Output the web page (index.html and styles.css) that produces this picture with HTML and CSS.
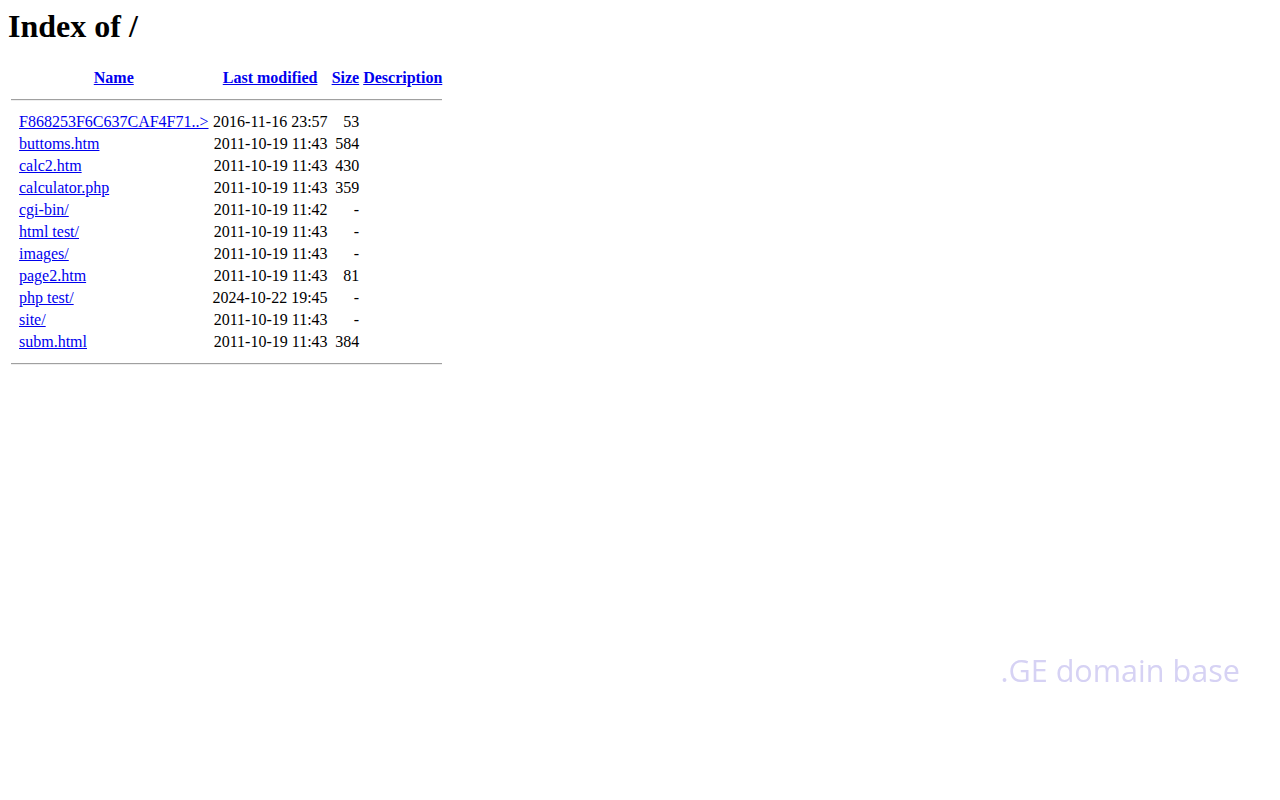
FILE: index.html
```html
<!DOCTYPE html>
<html>
<head>
<meta charset="utf-8">
<title>Index of /</title>
<link rel="stylesheet" href="styles.css">
</head>
<body>
<h1 class="title">Index of /</h1>
<table class="listing">
  <tr class="head">
    <th class="icon"><span class="ico"></span></th>
    <th><a href="#">Name</a></th>
    <th><a href="#">Last modified</a></th>
    <th><a href="#">Size</a></th>
    <th><a href="#">Description</a></th>
  </tr>
  <tr><th colspan="5"><hr class="rule"></th></tr>
  <tr><td class="icon"><span class="ico"></span></td><td><a href="#">F868253F6C637CAF4F71..&gt;</a></td><td class="r">2016-11-16 23:57  </td><td class="r">53</td><td>&nbsp;</td></tr>
  <tr><td class="icon"><span class="ico"></span></td><td><a href="#">buttoms.htm</a></td><td class="r">2011-10-19 11:43  </td><td class="r">584</td><td>&nbsp;</td></tr>
  <tr><td class="icon"><span class="ico"></span></td><td><a href="#">calc2.htm</a></td><td class="r">2011-10-19 11:43  </td><td class="r">430</td><td>&nbsp;</td></tr>
  <tr><td class="icon"><span class="ico"></span></td><td><a href="#">calculator.php</a></td><td class="r">2011-10-19 11:43  </td><td class="r">359</td><td>&nbsp;</td></tr>
  <tr><td class="icon"><span class="ico"></span></td><td><a href="#">cgi-bin/</a></td><td class="r">2011-10-19 11:42  </td><td class="r">- </td><td>&nbsp;</td></tr>
  <tr><td class="icon"><span class="ico"></span></td><td><a href="#">html test/</a></td><td class="r">2011-10-19 11:43  </td><td class="r">- </td><td>&nbsp;</td></tr>
  <tr><td class="icon"><span class="ico"></span></td><td><a href="#">images/</a></td><td class="r">2011-10-19 11:43  </td><td class="r">- </td><td>&nbsp;</td></tr>
  <tr><td class="icon"><span class="ico"></span></td><td><a href="#">page2.htm</a></td><td class="r">2011-10-19 11:43  </td><td class="r">81</td><td>&nbsp;</td></tr>
  <tr><td class="icon"><span class="ico"></span></td><td><a href="#">php test/</a></td><td class="r">2024-10-22 19:45  </td><td class="r">- </td><td>&nbsp;</td></tr>
  <tr><td class="icon"><span class="ico"></span></td><td><a href="#">site/</a></td><td class="r">2011-10-19 11:43  </td><td class="r">- </td><td>&nbsp;</td></tr>
  <tr><td class="icon"><span class="ico"></span></td><td><a href="#">subm.html</a></td><td class="r">2011-10-19 11:43  </td><td class="r">384</td><td>&nbsp;</td></tr>
  <tr><th colspan="5"><hr class="rule"></th></tr>
</table>
<div class="watermark">.GE domain base</div>
</body>
</html>
```

FILE: styles.css
```css
html, body {
  background: #ffffff;
}
body {
  margin: 8px;
  font-family: "Liberation Serif", "Times New Roman", serif;
  font-size: 16px;
  color: #000000;
}
.title {
  margin: 0 0 21.44px 0;
  font-size: 32px;
  font-weight: bold;
}
.listing {
  border-spacing: 2px;
}
.listing td, .listing th {
  padding: 1px;
}
.listing a {
  color: #0000ee;
  text-decoration: underline;
}
.listing .r {
  text-align: right;
}
.ico {
  display: inline-block;
  width: 4px;
}
.rule {
  margin: 8px 0;
  border: 0;
  border-top: 1px solid #a0a0a0;
  border-bottom: 1px solid #eeeeee;
  height: 0;
}
.watermark {
  position: fixed;
  right: 40px;
  top: 650px;
  font-family: "Open Sans", sans-serif;
  font-size: 30.6px;
  line-height: 1.362;
  color: #d6d2f4;
  white-space: nowrap;
}
```
